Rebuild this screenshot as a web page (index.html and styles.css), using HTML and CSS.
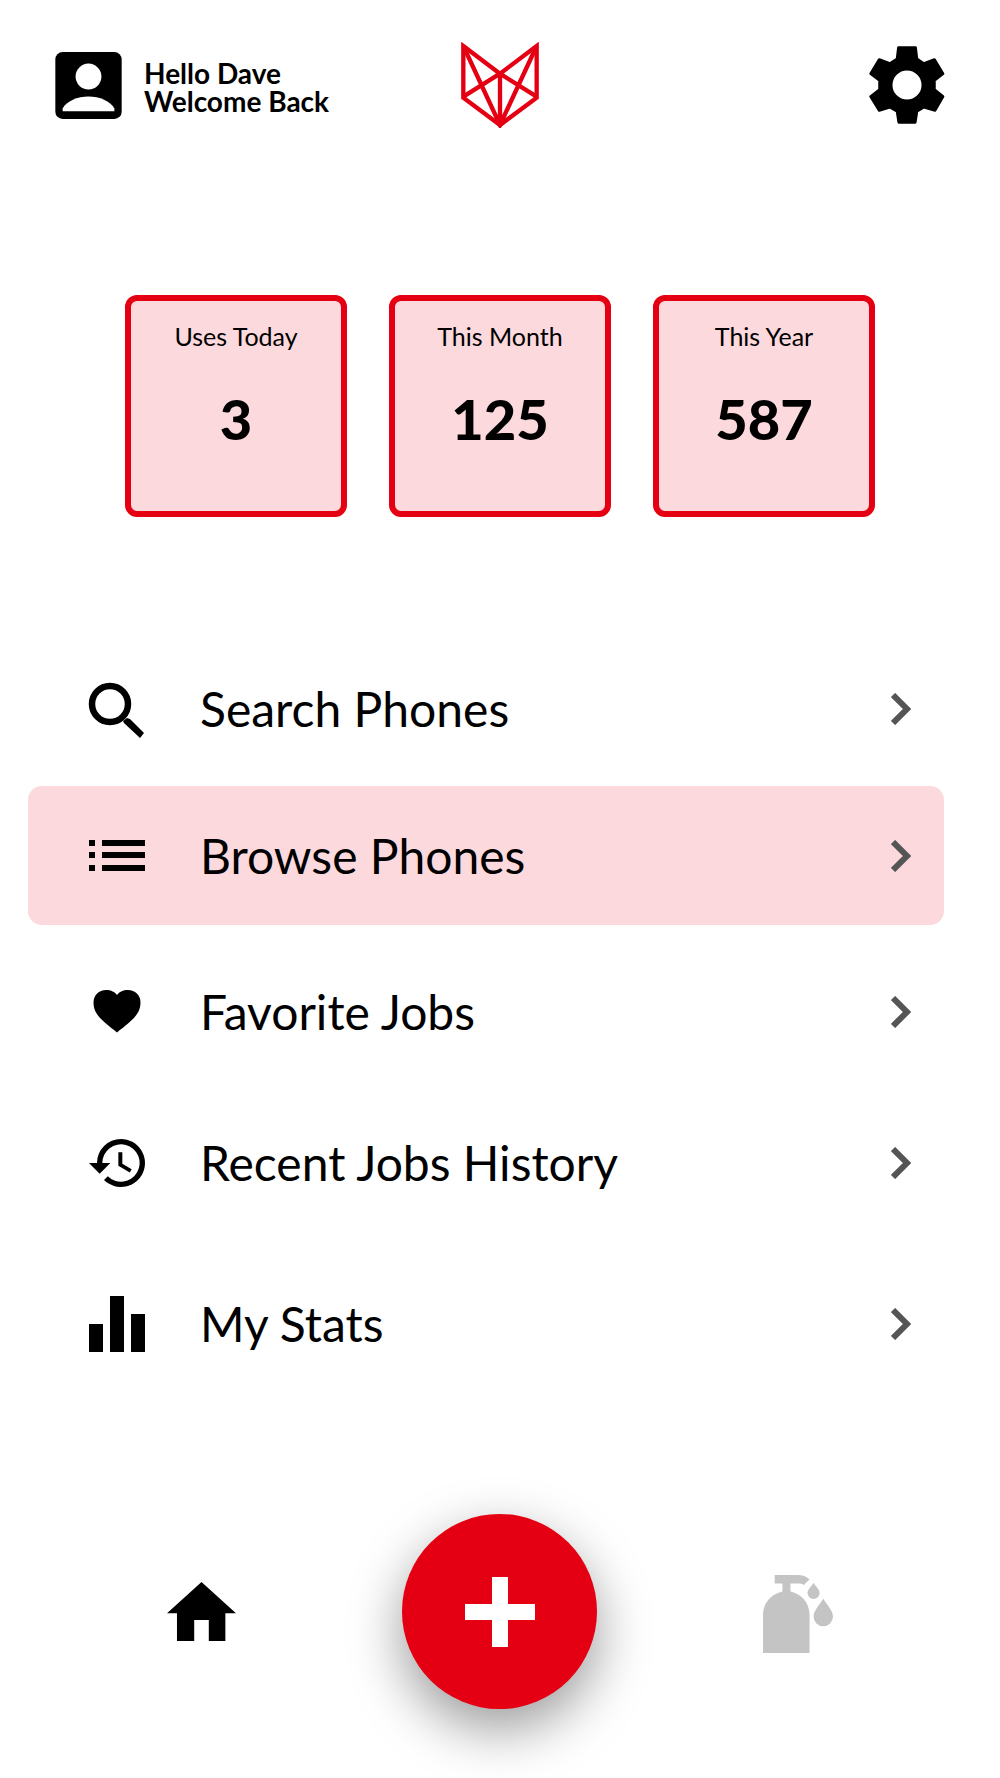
FILE: index.html
```html
<!DOCTYPE html>
<html lang="en">
<head>
    <meta charset="UTF-8">
    <meta name="viewport" content="width=device-width, initial-scale=1.0">
    <title>Home</title>
    <link rel="stylesheet" href="styles.css">
</head>
<body>
    <header class="header">
        <a class="user" href="#profile">
            <svg class="avatar" viewBox="47 67 200 202" aria-hidden="true">
                <rect x="47" y="67" width="200" height="202" rx="22"/>
                <circle cx="147" cy="141" r="39" fill="#fff"/>
                <path d="M69 246v-9c12-22 45-36 78-36s66 14 78 36v9z" fill="#fff"/>
            </svg>
            <span class="greeting">Hello Dave<br>Welcome Back</span>
        </a>
        <svg class="logo" viewBox="64 36 232 258" aria-hidden="true">
            <path d="M70 48L180 131L290 48V203L180 285L70 203Z"/>
            <path d="M70 48L180 285L290 48M70 200L180 131L290 200M180 131V285"/>
        </svg>
        <button class="settings" type="button" aria-label="Settings">
            <svg viewBox="56 46 230 236" aria-hidden="true">
                <path fill-rule="evenodd" d="M145 51H197L201 85L222 99L254 87L280 130L254 150V178L280 199L256 241L222 231L201 244L196 277H146L141 244L119 231L87 241L61 199L88 178V150L61 130L87 87L119 99L141 85ZM171 116a48 48 0 1 0 0 96a48 48 0 1 0 0-96z"/>
            </svg>
        </button>
    </header>

    <main>
        <section class="stats">
            <div class="card">
                <h2 class="card-label">Uses Today</h2>
                <p class="card-value">3</p>
            </div>
            <div class="card">
                <h2 class="card-label">This Month</h2>
                <p class="card-value">125</p>
            </div>
            <div class="card">
                <h2 class="card-label">This Year</h2>
                <p class="card-value">587</p>
            </div>
        </section>

        <nav class="menu">
            <a class="menu-item" href="#search">
                <svg class="menu-icon" viewBox="0 -2 56 56" aria-hidden="true">
                    <circle cx="21" cy="21" r="18" fill="none" stroke="#000" stroke-width="6.5"/>
                    <path d="M34 38l4-3 3 1 14 14-4 5-16-15z"/>
                </svg>
                <span class="menu-text">Search Phones</span>
                <svg class="chevron" viewBox="0 0 20 32" aria-hidden="true"><path d="M2 2L16 16L2 30"/></svg>
            </a>
            <a class="menu-item active" href="#browse">
                <svg class="menu-icon" viewBox="0 0 56 56" aria-hidden="true">
                    <path d="M0 12h6v6H0zM13 12h43v6H13zM0 24h6v6H0zM13 24h43v6H13zM0 37h6v6H0zM13 37h43v6H13z"/>
                </svg>
                <span class="menu-text">Browse Phones</span>
                <svg class="chevron" viewBox="0 0 20 32" aria-hidden="true"><path d="M2 2L16 16L2 30"/></svg>
            </a>
            <a class="menu-item" href="#favorites">
                <svg class="menu-icon" viewBox="0 0 56 56" aria-hidden="true">
                    <path d="M28 48.500C14 37 4.500 31 4.500 18.500C4.500 11 10 6 17 6C22 6 26 8 28 11C30 8 34 6 39 6C46 6 51.500 11 51.500 18.500C51.500 31 42 37 28 48.500z"/>
                </svg>
                <span class="menu-text">Favorite Jobs</span>
                <svg class="chevron" viewBox="0 0 20 32" aria-hidden="true"><path d="M2 2L16 16L2 30"/></svg>
            </a>
            <a class="menu-item" href="#history">
                <svg class="menu-icon" viewBox="1 1.5 21 21" aria-hidden="true">
                    <path d="M13 3a9 9 0 0 0-9 9H1l4 4 4-4H6a7 7 0 1 1 2.050 4.940l-1.420 1.420A9 9 0 1 0 13 3zm-1 5v5l4.280 2.540.720-1.210-3.500-2.080V8z"/>
                </svg>
                <span class="menu-text">Recent Jobs History</span>
                <svg class="chevron" viewBox="0 0 20 32" aria-hidden="true"><path d="M2 2L16 16L2 30"/></svg>
            </a>
            <a class="menu-item" href="#stats">
                <svg class="menu-icon" viewBox="0 0 56 56" aria-hidden="true">
                    <path d="M0 28h14v28H0zM21 0h14v56H21zM42 18h14v38H42z"/>
                </svg>
                <span class="menu-text">My Stats</span>
                <svg class="chevron" viewBox="0 0 20 32" aria-hidden="true"><path d="M2 2L16 16L2 30"/></svg>
            </a>
        </nav>
    </main>

    <footer class="tabs">
        <a class="tab" href="#home" aria-label="Home">
            <svg class="home-icon" viewBox="51 63 208 178" aria-hidden="true">
                <path d="M155 63L259 157H227V241H177V178H133V241H81V157H51Z"/>
            </svg>
        </a>
        <button class="add" type="button" aria-label="Add job">
            <svg viewBox="0 0 70 70" aria-hidden="true">
                <path d="M27 0h16v27h27v16H43v27H27V43H0V27h27z"/>
            </svg>
        </button>
        <a class="tab" href="#sanitize" aria-label="Sanitize">
            <svg class="soap-icon" viewBox="71 33 209 245" aria-hidden="true">
                <path d="M71 278V164C71 128 96 101 129 94V70H106V45H174C189 45 200 49 210 58L193 75C188 71 183 70 175 70H153V94C186 101 210 128 210 164V278Z"/>
                <path d="M222 69C230 80 240 89 240 99a18 18 0 0 1-36 0C204 89 214 80 222 69z"/>
                <path d="M251 116C262 135 280 151 280 169a29 29 0 0 1-58 0C222 151 240 135 251 116z"/>
            </svg>
        </a>
    </footer>
</body>
</html>
```

FILE: styles.css
```css
* {
    box-sizing: border-box;
}
body {
    margin: 0;
    font-family: Lato, "Liberation Sans", sans-serif;
    background-color: #fff;
    color: #000;
}
a {
    color: inherit;
    text-decoration: none;
}
button {
    border: none;
    padding: 0;
    cursor: pointer;
}
svg {
    display: block;
}

/* top bar */
.header {
    display: grid;
    grid-template-columns: 1fr auto 1fr;
    align-items: center;
    padding: 42px 55px 0;
}
.user {
    display: flex;
    align-items: center;
    gap: 22px;
}
.avatar {
    width: 67px;
    height: 67px;
}
.greeting {
    padding-top: 4px;
    font-size: 28px;
    line-height: 28px;
    font-weight: 700;
}
.logo {
    width: 78px;
    height: 86px;
    fill: none;
    stroke: #e40012;
    stroke-width: 13px;
}
.settings {
    justify-self: end;
    background: none;
}
.settings svg {
    width: 76px;
    height: 78px;
    stroke: #000;
    stroke-width: 8px;
    stroke-linejoin: round;
}

/* usage cards */
.stats {
    display: grid;
    grid-template-columns: repeat(3, 1fr);
    gap: 42px;
    padding: 167px 125px 0;
}
.card {
    aspect-ratio: 1;
    background-color: #fcd9dd;
    border: 6px solid #e40012;
    border-radius: 12px;
    padding-top: 20px;
    text-align: center;
}
.card-label {
    margin: 0;
    font-size: 25px;
    line-height: 30px;
    font-weight: 400;
}
.card-value {
    margin: 36px 0 0;
    font-size: 56px;
    line-height: 64px;
    font-weight: 900;
}

/* menu */
.menu {
    display: grid;
    grid-template-rows: 154px 139px 174px 128px 194px;
    padding: 115px 56px 0 28px;
}
.menu-item {
    display: flex;
    align-items: center;
    padding: 0 33px 0 61px;
    border-radius: 14px;
}
.active {
    background-color: #fcd9dd;
}
.menu-icon {
    width: 56px;
    height: 56px;
    overflow: visible;
}
.menu-text {
    flex: 1;
    padding-left: 55px;
    font-size: 48px;
    line-height: 58px;
}
.chevron {
    width: 20px;
    height: 32px;
    fill: none;
    stroke: #555;
    stroke-width: 6px;
}

/* bottom bar */
.tabs {
    display: flex;
    align-items: center;
    justify-content: space-between;
    padding: 93px 167px 68px;
}
.home-icon {
    width: 69px;
    height: 59px;
}
.add {
    display: flex;
    align-items: center;
    justify-content: center;
    width: 195px;
    height: 195px;
    border-radius: 50%;
    background-color: #e40012;
    box-shadow: 0 20px 54px rgba(0, 0, 0, 0.4);
}
.add svg {
    width: 70px;
    height: 70px;
    fill: #fff;
}
.soap-icon {
    width: 70px;
    height: 82px;
    fill: #c4c4c4;
}
```
